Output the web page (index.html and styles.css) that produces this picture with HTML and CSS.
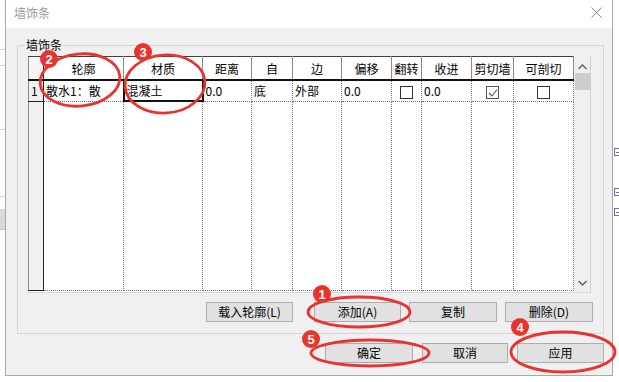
FILE: index.html
```html
<!DOCTYPE html>
<html lang="zh-CN">
<head>
    <meta charset="UTF-8">
    <title>墙饰条</title>
    <link rel="stylesheet" href="styles.css">
</head>
<body>
    <div class="screen">
        <div class="behind-left">
            <div class="bl-line" style="height: 50px"></div>
            <div class="bl-line" style="height: 16px"></div>
            <div class="bl-line" style="height: 64px"></div>
            <div class="bl-line" style="height: 67px"></div>
            <div class="bl-gap"></div>
            <div class="bl-block"></div>
        </div>

        <div class="dialog">
            <div class="titlebar">
                <span class="title">墙饰条</span>
                <svg class="close" width="11" height="11" viewBox="0 0 11 11">
                    <path d="M0.5 0.5 L10.5 10.5 M10.5 0.5 L0.5 10.5" stroke="#8a8a8a" stroke-width="1" fill="none"/>
                </svg>
            </div>

            <div class="dialog-body">
                <fieldset class="group">
                    <legend>墙饰条</legend>

                    <div class="grid">
                        <table class="sheet">
                            <colgroup>
                                <col style="width: 15px">
                                <col style="width: 80px">
                                <col style="width: 79px">
                                <col style="width: 49px">
                                <col style="width: 41px">
                                <col style="width: 49px">
                                <col style="width: 50px">
                                <col style="width: 30px">
                                <col style="width: 50px">
                                <col style="width: 42px">
                                <col style="width: 60px">
                            </colgroup>
                            <thead>
                                <tr>
                                    <th class="rowhead"></th>
                                    <th>轮廓</th>
                                    <th>材质</th>
                                    <th>距离</th>
                                    <th>自</th>
                                    <th>边</th>
                                    <th>偏移</th>
                                    <th>翻转</th>
                                    <th>收进</th>
                                    <th>剪切墙</th>
                                    <th>可剖切</th>
                                </tr>
                            </thead>
                            <tbody>
                                <tr class="data-row">
                                    <td class="rowhead">1</td>
                                    <td>散水1：散</td>
                                    <td class="selected">混凝土</td>
                                    <td>0.0</td>
                                    <td>底</td>
                                    <td>外部</td>
                                    <td>0.0</td>
                                    <td class="check-cell"><span class="checkbox"></span></td>
                                    <td>0.0</td>
                                    <td class="check-cell">
                                        <span class="checkbox checked">
                                            <svg width="10" height="10" viewBox="0 0 10 10">
                                                <path d="M1 5 L4 8 L9 1.5" stroke="#555" stroke-width="1.1" fill="none"/>
                                            </svg>
                                        </span>
                                    </td>
                                    <td class="check-cell"><span class="checkbox"></span></td>
                                </tr>
                                <tr class="filler-row">
                                    <td class="rowhead"></td>
                                    <td></td><td></td><td></td><td></td><td></td>
                                    <td></td><td></td><td></td><td></td><td></td>
                                </tr>
                            </tbody>
                        </table>

                        <div class="scrollbar">
                            <svg class="arrow" width="9" height="6" viewBox="0 0 9 6">
                                <path d="M0.5 5 L4.5 1 L8.5 5" stroke="#606060" stroke-width="1.4" fill="none"/>
                            </svg>
                            <div class="thumb"></div>
                            <div class="track"></div>
                            <svg class="arrow" width="9" height="6" viewBox="0 0 9 6">
                                <path d="M0.5 1 L4.5 5 L8.5 1" stroke="#606060" stroke-width="1.4" fill="none"/>
                            </svg>
                        </div>
                    </div>

                    <div class="button-row">
                        <button class="btn btn-load">载入轮廓(L)</button>
                        <button class="btn">添加(A)</button>
                        <button class="btn btn-wide">复制</button>
                        <button class="btn btn-wide">删除(D)</button>
                    </div>
                </fieldset>

                <div class="footer">
                    <button class="btn btn-wide">确定</button>
                    <button class="btn btn-narrow">取消</button>
                    <button class="btn">应用</button>
                </div>
            </div>
        </div>

        <div class="behind-right">
            <span class="node"></span>
            <span class="node node-2"></span>
            <span class="node node-3"></span>
        </div>
    </div>

    <svg class="marks" width="619" height="382" viewBox="0 0 619 382">
        <g fill="none" stroke="#e8332f" stroke-width="2.8">
            <ellipse cx="80" cy="80" rx="40" ry="26" transform="rotate(-6 80 80)"/>
            <ellipse cx="165" cy="84" rx="40" ry="29" transform="rotate(-4 165 84)"/>
            <ellipse cx="359" cy="312" rx="51" ry="15"/>
            <ellipse cx="370" cy="353" rx="59" ry="13"/>
            <ellipse cx="563" cy="352" rx="52" ry="20"/>
        </g>
        <g class="badges">
            <circle cx="49" cy="59" r="9"/>
            <text x="49" y="63.5">2</text>
            <circle cx="143" cy="52" r="9"/>
            <text x="143" y="56.5">3</text>
            <circle cx="322" cy="294" r="9"/>
            <text x="322" y="298.5">1</text>
            <circle cx="311" cy="339" r="9"/>
            <text x="311" y="343.5">5</text>
            <circle cx="520" cy="327" r="9"/>
            <text x="520" y="331.5">4</text>
        </g>
    </svg>
</body>
</html>
```

FILE: styles.css
```css
body {
    margin: 0;
    width: 619px;
    height: 382px;
    overflow: hidden;
    background-color: #ffffff;
    font-family: "Noto Sans CJK SC", "Liberation Sans", sans-serif;
    font-size: 12px;
    color: #000;
    position: relative;
}

.screen {
    display: flex;
    align-items: flex-start;
    height: 382px;
}

/* window behind the dialog */
.behind-left {
    width: 5px;
    flex-shrink: 0;
    display: flex;
    flex-direction: column;
}

.bl-line {
    border-bottom: 1px solid #d4d4d4;
    box-sizing: border-box;
}

.bl-gap {
    height: 12px;
}

.bl-block {
    height: 20px;
    background-color: #d9d9d9;
    border-bottom: 1px solid #c4c4c4;
}

.behind-right {
    flex: 1;
    height: 382px;
    position: relative;
}

.node {
    position: absolute;
    left: 1px;
    top: 148px;
    width: 5px;
    height: 6px;
    border: 1px solid #6c72a0;
    border-right: none;
    background: linear-gradient(#6c72a0, #6c72a0) center / 4px 1px no-repeat;
}

.node-2 { top: 188px; }
.node-3 { top: 208px; }

/* dialog */
.dialog {
    width: 608px;
    height: 376px;
    flex-shrink: 0;
    box-sizing: border-box;
    border-left: 1px solid #a8a8a8;
    border-right: 1px solid #a8a8a8;
    border-bottom: 1px solid #a8a8a8;
    background-color: #f0f0f0;
    display: flex;
    flex-direction: column;
}

.titlebar {
    height: 28px;
    background-color: #ffffff;
    display: flex;
    align-items: center;
    justify-content: space-between;
    padding: 0 10px 0 8px;
    flex-shrink: 0;
}

.title {
    color: #9a9a9a;
    font-size: 12px;
    margin-top: -3px;
}

.close {
    margin-top: -4px;
}

.dialog-body {
    flex: 1;
    display: flex;
    flex-direction: column;
}

.group {
    margin: 10px 8px 0 11px;
    padding: 4px 10px 11px 10px;
    border: 1px solid #d5d5d5;
    min-width: 0;
}

.group legend {
    padding: 0 1px;
    margin-left: -3px;
    line-height: 14px;
    font-size: 12px;
}

/* grid */
.grid {
    display: flex;
    width: 563px;
    height: 237px;
    box-sizing: border-box;
    border-right: 1px solid #d0d0d0;
    border-bottom: 1px solid #d8d8d8;
    background-color: #ffffff;
}

.sheet {
    width: 545px;
    height: 235px;
    table-layout: fixed;
    border-collapse: collapse;
    background-color: #ffffff;
}

.sheet th {
    height: 22px;
    padding: 0;
    font-weight: normal;
    text-align: center;
    border-top: 1px solid #404040;
    border-right: 1px solid #8a8a8a;
    border-bottom: 2px solid #111;
    white-space: nowrap;
}

.sheet td {
    padding: 0 0 0 2px;
    border-right: 1px dotted #777;
    border-bottom: 1px dotted #777;
    white-space: nowrap;
    overflow: hidden;
    vertical-align: middle;
}

.data-row td {
    height: 19px;
}

.filler-row td {
    height: auto;
}

.sheet .rowhead {
    background-color: #f0f0f0;
    border-left: 1px solid #8c8c8c;
    border-right: 1px solid #222;
    padding-left: 2px;
    text-align: left;
}

.sheet td.rowhead {
    border-bottom: 1px solid #222;
}

.sheet th.rowhead {
    background-color: #f6f6f6;
}

.sheet td.selected {
    border: 2px solid #111;
}

.check-cell {
    text-align: center;
}

.sheet td.check-cell {
    padding: 0;
}

.checkbox {
    display: inline-block;
    width: 11px;
    height: 11px;
    border: 1px solid #333;
    background-color: #fff;
    vertical-align: middle;
    position: relative;
}

.checkbox.checked {
    border-color: #555;
}

.checkbox svg {
    display: block;
    margin: 1px 0 0 1px;
}

/* scrollbar */
.scrollbar {
    width: 17px;
    background-color: #f0f0f0;
    display: flex;
    flex-direction: column;
    align-items: center;
}

.arrow {
    margin: 8px 0 3px;
    flex-shrink: 0;
}

.arrow:last-child {
    margin: 3px 0 6px;
}

.thumb {
    width: 15px;
    height: 17px;
    margin-left: 1px;
    background-color: #cdcdcd;
    flex-shrink: 0;
}

.track {
    flex: 1;
}

/* buttons */
.button-row {
    display: flex;
    justify-content: flex-end;
    gap: 8px;
    margin-top: 9px;
}

.footer {
    display: flex;
    justify-content: flex-end;
    gap: 9px;
    margin-top: 9px;
    padding-right: 8px;
}

.btn {
    width: 87px;
    height: 20px;
    padding: 0;
    background-color: #e1e1e1;
    border: 1px solid #adadad;
    border-radius: 0;
    font-family: "Noto Sans CJK SC", "Liberation Sans", sans-serif;
    font-size: 12px;
    line-height: 18px;
    color: #000;
}

.btn-wide {
    width: 88px;
}

.btn-narrow {
    width: 86px;
}

.btn-load {
    margin-right: 13px;
}

/* red annotations over the dialog */
.marks {
    position: absolute;
    left: 0;
    top: 0;
    pointer-events: none;
}

.badges circle {
    fill: #e8332f;
}

.badges text {
    fill: #ffffff;
    font-family: "Liberation Sans", sans-serif;
    font-size: 13px;
    font-weight: bold;
    text-anchor: middle;
}
```
